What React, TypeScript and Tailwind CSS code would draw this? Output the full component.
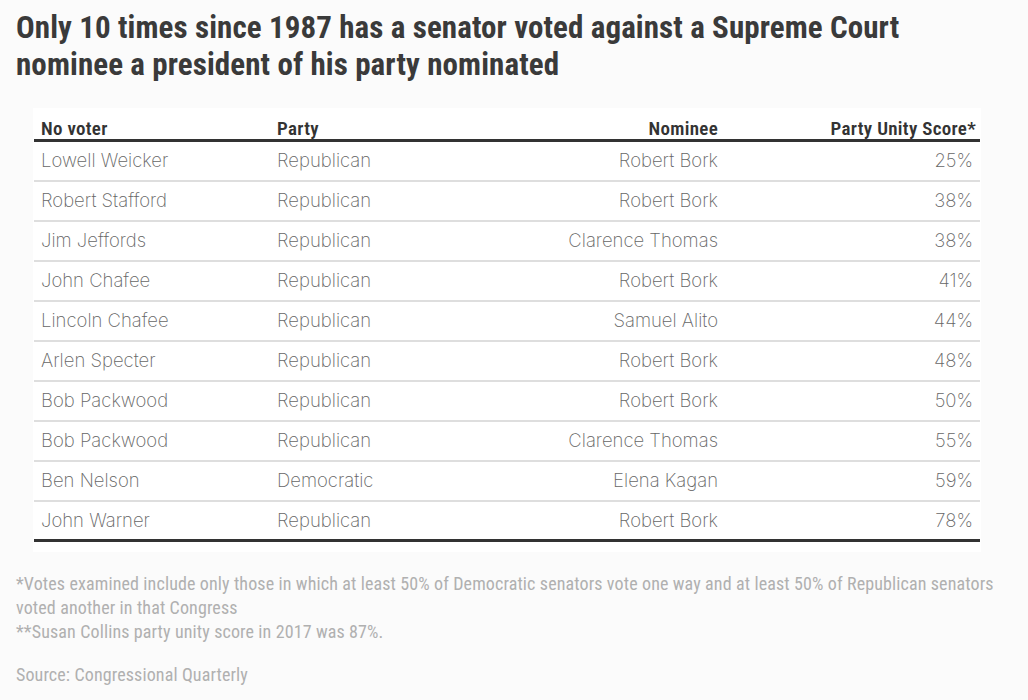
import React from "react";

const rows: [string, string, string, string][] = [
  ["Lowell Weicker", "Republican", "Robert Bork", "25%"],
  ["Robert Stafford", "Republican", "Robert Bork", "38%"],
  ["Jim Jeffords", "Republican", "Clarence Thomas", "38%"],
  ["John Chafee", "Republican", "Robert Bork", "41%"],
  ["Lincoln Chafee", "Republican", "Samuel Alito", "44%"],
  ["Arlen Specter", "Republican", "Robert Bork", "48%"],
  ["Bob Packwood", "Republican", "Robert Bork", "50%"],
  ["Bob Packwood", "Republican", "Clarence Thomas", "55%"],
  ["Ben Nelson", "Democratic", "Elena Kagan", "59%"],
  ["John Warner", "Republican", "Robert Bork", "78%"],
];

export default function App() {
  return (
    <div className="min-h-[700px] w-[1028px] bg-[#fbfbfb] pt-[9px]">
      <h1 className="pl-4 font-['Roboto_Condensed',sans-serif] text-[31px] font-bold leading-[37px] tracking-[0.1px] text-[#3a3a3a]">
        Only 10 times since 1987 has a senator voted against a Supreme Court
        <br />
        nominee a president of his party nominated
      </h1>

      <div className="ml-[33px] mt-[25px] w-[948px] bg-white px-px pb-[10px] pt-[12px]">
        <div className="grid grid-cols-[236px_236px_219px_1fr] border-b-[3px] border-[#333] pb-[1px] font-['Roboto_Condensed',sans-serif] text-[19px] font-semibold leading-[18px] tracking-[0.3px] text-[#333]">
          <div className="pl-[7px]">No voter</div>
          <div className="pl-[7px]">Party</div>
          <div className="pr-[7px] text-right">Nominee</div>
          <div className="pr-[4px] text-right">Party Unity Score*</div>
        </div>
        {rows.map((r, i) => (
          <div
            key={i}
            className={`grid h-[40px] grid-cols-[236px_236px_219px_1fr] items-center font-['Inter',sans-serif] text-[18.5px] font-[250] text-[#666] ${
              i === rows.length - 1 ? "border-b-[3px] border-[#333]" : "border-b-2 border-[#dedede]"
            }`}
          >
            <div className="pl-[7px]">{r[0]}</div>
            <div className="pl-[7px]">{r[1]}</div>
            <div className="pr-[7px] text-right">{r[2]}</div>
            <div className="pr-[7px] text-right">{r[3]}</div>
          </div>
        ))}
      </div>

      <div className="mt-[20px] pl-4 font-['Roboto_Condensed',sans-serif] text-[18px] leading-[24px] tracking-[0.12px] text-[#b0b0b0]">
        <p>
          *Votes examined include only those in which at least 50% of Democratic senators vote one way and at least 50% of Republican senators
          <br />
          voted another in that Congress
        </p>
        <p>**Susan Collins party unity score in 2017 was 87%.</p>
        <p className="mt-[19px]">Source: Congressional Quarterly</p>
      </div>
    </div>
  );
}
